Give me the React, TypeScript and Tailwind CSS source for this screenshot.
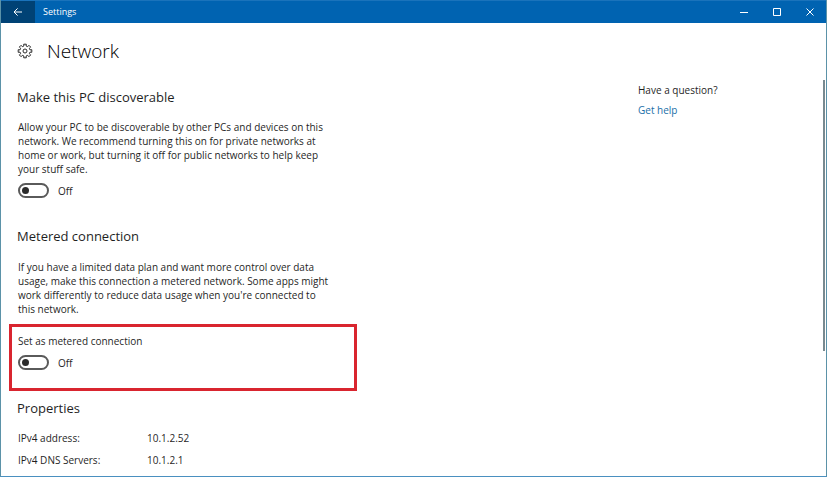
import { useState } from "react";

const properties = [
  { label: "IPv4 address:", value: "10.1.2.52" },
  { label: "IPv4 DNS Servers:", value: "10.1.2.1" },
];

function GearIcon() {
  return (
    <svg
      viewBox="0 0 16 16"
      className="size-4"
      fill="none"
      stroke="#2b2b2b"
      strokeWidth="1"
      strokeLinejoin="round"
      aria-hidden="true"
    >
      <path d="M6.9 3 6.7 1.2h2.6L9.1 3l1.6.7 1.2-1.4 1.8 1.8-1.4 1.2.7 1.6 1.8-.2v2.6L13 9.1l-.7 1.6 1.4 1.2-1.8 1.8-1.2-1.4-1.6.7.2 1.8H6.7L6.9 13l-1.6-.7-1.2 1.4-1.8-1.8 1.4-1.2L3 9.1l-1.8.2V6.7L3 6.9l.7-1.6-1.4-1.2 1.8-1.8 1.2 1.4z" />
      <circle cx="8" cy="8" r="2" />
    </svg>
  );
}

function TitleBar() {
  return (
    <header className="flex h-[23px] items-stretch border-t border-[#1a73bb] bg-[#0063b1] text-white">
      <button
        type="button"
        aria-label="Back"
        className="flex w-[34px] items-center justify-center bg-[#004275]"
      >
        <svg viewBox="0 0 10 10" className="size-[10px]" fill="none" stroke="currentColor">
          <path d="M9 5H1.2M4.6 1.4 1 5l3.6 3.6" />
        </svg>
      </button>
      <h1 className="flex-1 self-center pl-2 text-[9px] leading-3">Settings</h1>
      <button type="button" aria-label="Minimize" className="flex w-[33px] items-center justify-center">
        <svg viewBox="0 0 8 8" className="size-2" fill="none" stroke="currentColor">
          <path d="M0 4.5h8" />
        </svg>
      </button>
      <button type="button" aria-label="Maximize" className="flex w-[33px] items-center justify-center">
        <svg viewBox="0 0 8 8" className="size-2" fill="none" stroke="currentColor">
          <path d="M.5.5h7v7h-7z" />
        </svg>
      </button>
      <button type="button" aria-label="Close" className="flex w-[33px] items-center justify-center">
        <svg viewBox="0 0 8 8" className="size-2" fill="none" stroke="currentColor">
          <path d="m.5.5 7 7m0-7-7 7" />
        </svg>
      </button>
    </header>
  );
}

function Toggle({ id, label }: { id: string; label: string }) {
  const [on, setOn] = useState(false);

  return (
    <div className="flex items-center gap-[9px]">
      <input
        id={id}
        type="checkbox"
        role="switch"
        aria-label={label}
        checked={on}
        onChange={(e) => setOn(e.target.checked)}
        className="flex h-[15px] w-[31px] appearance-none items-center rounded-full border-2 border-[#5a5a5a] px-[2px] before:size-[7px] before:rounded-full before:bg-[#2b2b2b] checked:justify-end"
      />
      <label htmlFor={id}>{on ? "On" : "Off"}</label>
    </div>
  );
}

export default function App() {
  return (
    <div className="flex min-h-screen flex-col border-x border-b border-x-[#5b92a8] border-b-[#4a90c0] bg-white font-['Open_Sans','Noto_Sans',sans-serif] text-[10px] leading-[14px] text-[#1f1f1f]">
      <TitleBar />
      <div className="flex flex-1">
        <main className="flex-1 px-4 pt-4 pb-2">
          <div className="flex items-center gap-[14px]">
            <GearIcon />
            <h2 className="text-[19px] leading-6 font-light text-black">Network</h2>
          </div>

          <section className="pt-6">
            <h3 className="text-[13px] leading-5">Make this PC discoverable</h3>
            <div className="flex flex-col gap-[7px] pt-[13px] pl-px">
              <p className="w-[314px]">
                Allow your PC to be discoverable by other PCs and devices on
                this network. We recommend turning this on for private networks
                at home or work, but turning it off for public networks to help
                keep your stuff safe.
              </p>
              <Toggle id="discoverable" label="Make this PC discoverable" />
            </div>
          </section>

          <section className="pt-7">
            <h3 className="text-[13px] leading-5">Metered connection</h3>
            <p className="w-[315px] pt-[14px] pb-2 pl-px">
              If you have a limited data plan and want more control over data
              usage, make this connection a metered network. Some apps might
              work differently to reduce data usage when you're connected to
              this network.
            </p>
            <div className="-ml-2 flex h-[67px] w-[348px] flex-col gap-[7px] border-3 border-[#d9252f] px-[6px] pt-[7px]">
              <p>Set as metered connection</p>
              <Toggle id="metered" label="Set as metered connection" />
            </div>
          </section>

          <section className="pt-[7px]">
            <h3 className="text-[13px] leading-5">Properties</h3>
            <dl className="grid grid-cols-[129px_auto] gap-y-2 pt-[13px] pl-px">
              {properties.map((p) => (
                <div key={p.label} className="contents">
                  <dt>{p.label}</dt>
                  <dd>{p.value}</dd>
                </div>
              ))}
            </dl>
          </section>
        </main>

        <aside className="flex w-[185px] flex-col items-start gap-[6px] pt-[60px]">
          <p>Have a question?</p>
          <a href="#help" className="text-[#1a6fa8]">
            Get help
          </a>
        </aside>
        <div className="mt-[57px] mr-px h-[271px] w-[2px] bg-[#7a8a90]" />
      </div>
    </div>
  );
}
